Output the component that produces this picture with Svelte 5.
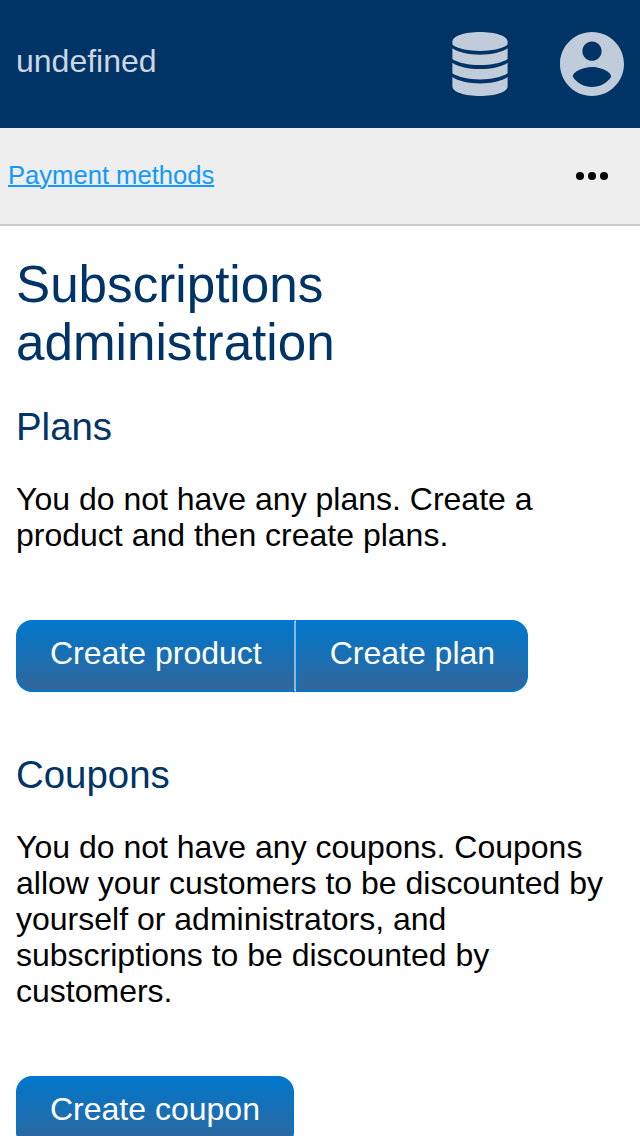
<script>
  const plans = ['Create product', 'Create plan'];
  const coupons = ['Create coupon'];
</script>

<div class="page">
  <header>
    <span class="title">undefined</span>
    <div class="icons">
      <svg width="56" height="64" viewBox="0 0 56 64" aria-hidden="true">
        <path d="M.4 9.5C.4 4 13 0 28 0s27.600 4 27.600 9.500v3.300C50 17 39 19 28 19S6 17 .4 12.800z" />
        <path d="M.4 16.300C6 20.400 17 22.700 28 22.700s22-2.300 27.600-6.400v10.600C50 30.800 39 33.100 28 33.100S6 30.800 .4 26.900z" />
        <path d="M.4 30.700C6 34.800 17 37.100 28 37.100s22-2.300 27.600-6.400v10.600C50 45.200 39 47.500 28 47.500S6 45.200 .4 41.300z" />
        <path d="M.4 45.100C6 49.200 17 51.500 28 51.500s22-2.300 27.600-6.400v9.400C55.600 60 43 64 28 64S.4 60 .4 54.500z" />
      </svg>
      <svg width="64" height="64" viewBox="2 2 20 20" aria-hidden="true">
        <path d="M12 2C6.480 2 2 6.480 2 12s4.480 10 10 10 10-4.480 10-10S17.520 2 12 2zm0 3c1.660 0 3 1.340 3 3s-1.340 3-3 3-3-1.340-3-3 1.340-3 3-3zm0 14.200c-2.500 0-4.710-1.280-6-3.220.03-1.990 4-3.080 6-3.080 1.990 0 5.970 1.090 6 3.080-1.290 1.940-3.500 3.220-6 3.220z" />
      </svg>
    </div>
  </header>
  <nav>
    <a href="#payment">Payment methods</a>
    <svg width="32" height="8" viewBox="0 0 32 8" aria-hidden="true">
      <circle cx="4" cy="4" r="4" /><circle cx="16" cy="4" r="4" /><circle cx="28" cy="4" r="4" />
    </svg>
  </nav>
  <main>
    <h1>Subscriptions administration</h1>
    <h2>Plans</h2>
    <p>You do not have any plans. Create a product and then create plans.</p>
    <div class="buttons">
      {#each plans as label}<button>{label}</button>{/each}
    </div>
    <h2>Coupons</h2>
    <p>You do not have any coupons. Coupons allow your customers to be discounted by yourself or administrators, and subscriptions to be discounted by customers.</p>
    <div class="buttons">
      {#each coupons as label}<button>{label}</button>{/each}
    </div>
  </main>
</div>

<style>
  .page {
    height: 1136px;
    overflow: hidden;
    background: #fff;
    color: #000;
    font: 32px/36px "Liberation Sans", Arial, sans-serif;
  }
  header {
    height: 128px;
    box-sizing: border-box;
    padding: 0 16px;
    display: flex;
    align-items: center;
    justify-content: space-between;
    background: #036;
  }
  .title {
    color: #ccd6e0;
    padding-bottom: 6px;
  }
  .icons {
    display: flex;
    gap: 52px;
    fill: #c0ccd9;
  }
  svg {
    display: block;
  }
  nav {
    height: 98px;
    box-sizing: border-box;
    padding: 0 32px 0 8px;
    display: flex;
    align-items: center;
    justify-content: space-between;
    background: #eee;
    border-bottom: 2px solid #ccc;
  }
  nav a {
    padding-bottom: 2px;
    color: #1199ff;
    font-size: 25.6px;
    line-height: 30px;
    text-decoration-thickness: 2px;
  }
  main {
    padding: 30px 16px 0;
  }
  h1, h2 {
    margin: 0;
    color: #036;
    font-weight: 400;
  }
  h1 {
    font-size: 51.2px;
    line-height: 58px;
  }
  h2 {
    margin-top: 33px;
    font-size: 38.4px;
    line-height: 44px;
  }
  p {
    margin: 32px 0 0;
  }
  .buttons {
    display: flex;
    width: max-content;
    margin: 67px 0 61px;
  }
  button {
    box-sizing: border-box;
    height: 72px;
    margin: 0;
    padding: 0 32px 6px;
    border: 2px solid #07c;
    background: linear-gradient(#07c, #369) border-box;
    color: #fff;
    font: inherit;
    white-space: nowrap;
  }
  button:first-child {
    border-radius: 16px 0 0 16px;
  }
  button:last-child {
    border-radius: 0 16px 16px 0;
  }
  button:only-child {
    border-radius: 16px;
  }
  button:not(:last-child) {
    border-right-color: rgba(255, 255, 255, 0.5);
  }
  button + button {
    padding-right: 31px;
  }
</style>
